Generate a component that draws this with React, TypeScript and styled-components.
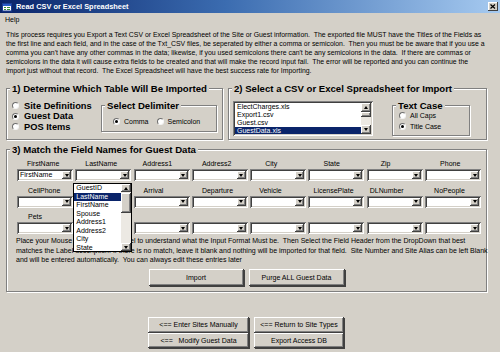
import React from 'react';
import styled, { createGlobalStyle } from 'styled-components';

const GlobalStyle = createGlobalStyle`
  html, body {
    margin: 0;
    padding: 0;
    background: #d4d0c8;
  }
  body {
    font-family: "Liberation Sans", Arial, sans-serif;
    color: #000;
  }
`;

const FACE = '#d4d0c8';

const Window = styled.div`
  width: 500px;
  height: 352px;
  background: ${FACE};
  display: flex;
  flex-direction: column;
  overflow: hidden;
  position: relative;
`;

const TitleBar = styled.div`
  height: 13px;
  display: flex;
  align-items: center;
  gap: 4px;
  padding: 0 2px;
  background: linear-gradient(90deg, #0a246a 0%, #3b6cb0 45%, #a6caf0 100%);
`;

const TitleText = styled.span`
  color: #fff;
  font-weight: bold;
  font-size: 7.4px;
  line-height: 13px;
  white-space: nowrap;
`;

const CloseButton = styled.span`
  margin-left: auto;
  width: 10px;
  height: 9px;
  background: ${FACE};
  box-shadow: inset -1px -1px #404040, inset 1px 1px #fff;
  display: flex;
  align-items: center;
  justify-content: center;
`;

const MenuBar = styled.div`
  height: 13px;
  padding-left: 5px;
  font-size: 7px;
  line-height: 13px;
`;

const Description = styled.div`
  padding: 4px 0 0 6px;
  font-size: 6.9px;
  line-height: 9px;
`;

const Line = styled.div`
  white-space: pre;
`;

const TopRow = styled.div`
  display: flex;
  gap: 5px;
  padding-left: 6px;
  margin-top: 7.5px;
`;

const Group = styled.fieldset<{ $w: number }>`
  margin: 0;
  padding: 0;
  min-width: 0;
  width: ${(p) => p.$w}px;
  box-sizing: border-box;
  border: 1px solid #808080;
  box-shadow: inset 1px 1px #fff, 1px 1px #fff;
`;

const Legend = styled.legend`
  margin-left: 3px;
  padding: 0 2px;
  background: ${FACE};
  font-weight: bold;
  font-size: 9.6px;
  line-height: 11px;
  white-space: nowrap;
`;

const GroupBody = styled.div<{ $pad: string }>`
  display: flex;
  align-items: flex-start;
  padding: ${(p) => p.$pad};
`;

const RadioColumn = styled.div<{ $w: number }>`
  width: ${(p) => p.$w}px;
  display: flex;
  flex-direction: column;
  padding-top: 7px;
`;

const RadioRow = styled.label<{ $big?: boolean; $h: number }>`
  display: flex;
  align-items: center;
  gap: ${(p) => (p.$big ? 5 : 4)}px;
  height: ${(p) => p.$h}px;
  font-size: ${(p) => (p.$big ? 9.3 : 7)}px;
  font-weight: ${(p) => (p.$big ? 'bold' : 'normal')};
  white-space: nowrap;
`;

const RadioDot = styled.span<{ $on?: boolean }>`
  width: 7px;
  height: 7px;
  box-sizing: border-box;
  border-radius: 50%;
  background: #fff;
  border: 1px solid;
  border-color: #6e6e6e #f4f4f4 #f4f4f4 #6e6e6e;
  display: inline-flex;
  align-items: center;
  justify-content: center;
  flex: none;
  &::after {
    content: '';
    width: 3px;
    height: 3px;
    border-radius: 50%;
    background: ${(p) => (p.$on ? '#000' : 'transparent')};
  }
`;

const SubGroup = styled(Group)<{ $gap?: number }>`
  margin-top: 6px;
  margin-left: ${(p) => p.$gap ?? 0}px;
`;

const RadioInline = styled.div`
  display: flex;
  gap: 8px;
  padding: 6px 0 5.5px 11px;
`;

const RadioStack = styled.div`
  display: flex;
  flex-direction: column;
  padding: 0 0 3px 6px;
`;

const Sunken = `
  background: #fff;
  box-shadow: inset 1px 1px #808080, inset -1px -1px #fff, inset 2px 2px #404040, inset -2px -2px ${FACE};
`;

const Raised = `
  background: ${FACE};
  box-shadow: inset -1px -1px #404040, inset 1px 1px #fff, inset -2px -2px #808080;
`;

const ListBox = styled.div`
  ${Sunken}
  width: 140px;
  height: 35px;
  margin-top: 7.5px;
  padding: 2px;
  box-sizing: border-box;
  display: flex;
  overflow: hidden;
`;

const ListItems = styled.div`
  flex: 1;
  display: flex;
  flex-direction: column;
  overflow: hidden;
`;

const ListItem = styled.div<{ $sel?: boolean; $h: number }>`
  height: ${(p) => p.$h}px;
  line-height: ${(p) => p.$h}px;
  font-size: 7px;
  padding-left: 2px;
  white-space: nowrap;
  flex: none;
  background: ${(p) => (p.$sel ? '#0a246a' : 'transparent')};
  color: ${(p) => (p.$sel ? '#fff' : '#000')};
`;

const ScrollBar = styled.div`
  width: 10px;
  display: flex;
  flex-direction: column;
  background: #ece9e3;
  flex: none;
`;

const ScrollButton = styled.div<{ $h: number; $top?: number }>`
  ${Raised}
  height: ${(p) => p.$h}px;
  margin-top: ${(p) => p.$top ?? 0}px;
  flex: none;
  display: flex;
  align-items: center;
  justify-content: center;
`;

const Track = styled.div`
  flex: 1;
`;

const Arrow = styled.span<{ $up?: boolean }>`
  width: 0;
  height: 0;
  border-left: 2.5px solid transparent;
  border-right: 2.5px solid transparent;
  ${(p) => (p.$up ? 'border-bottom: 3px solid #000;' : 'border-top: 3px solid #000;')}
`;

const MatchGroup = styled(Group)`
  margin: 3.5px 0 0 6px;
`;

const FieldGrid = styled.div`
  display: grid;
  grid-template-columns: repeat(8, 56px);
  column-gap: 2.3px;
  row-gap: 4.5px;
  padding: 4.5px 0 0 10px;
`;

const Field = styled.div`
  position: relative;
  display: flex;
  flex-direction: column;
`;

const FieldLabel = styled.div<{ $x: number }>`
  height: 10px;
  line-height: 10px;
  font-size: 7px;
  padding-left: ${(p) => p.$x}px;
  white-space: nowrap;
`;

const Combo = styled.div`
  ${Sunken}
  height: 12px;
  padding: 2px;
  box-sizing: border-box;
  display: flex;
  align-items: stretch;
`;

const ComboText = styled.span`
  flex: 1;
  font-size: 7px;
  line-height: 8px;
  padding-left: 1px;
  white-space: nowrap;
  overflow: hidden;
`;

const ComboButton = styled.span`
  ${Raised}
  width: 9px;
  display: flex;
  align-items: center;
  justify-content: center;
`;

const DropList = styled.div`
  position: absolute;
  top: 24px;
  left: -2px;
  width: 59px;
  height: 69px;
  box-sizing: border-box;
  border: 1px solid #000;
  background: #fff;
  display: flex;
  z-index: 2;
`;

const HelpText = styled.div`
  margin-top: 2px;
  padding-left: 9px;
  font-size: 7px;
  line-height: 9.5px;
`;

const ButtonRow = styled.div`
  display: flex;
  justify-content: center;
  gap: 5px;
  padding: 4.5px 0 5px;
`;

const Button = styled.button<{ $w: number; $h: number }>`
  ${Raised}
  box-shadow: inset -1px -1px #404040, inset 1px 1px #fff, inset -2px -2px #808080, 1px 1px #404040;
  width: ${(p) => p.$w}px;
  height: ${(p) => p.$h}px;
  border: none;
  padding: 0;
  font-family: "Liberation Sans", Arial, sans-serif;
  font-size: 7px;
  color: #000;
  white-space: pre;
`;

const NavArea = styled.div`
  display: flex;
  gap: 5px;
  padding-left: 148px;
  margin-top: 25px;
`;

const NavColumn = styled.div`
  display: flex;
  flex-direction: column;
`;

const AppIcon = () => (
  <svg width="10" height="10" viewBox="0 0 10 10">
    <rect x="0.5" y="1.5" width="9" height="7.5" fill="#fff" stroke="#1c3f94" />
    <rect x="1" y="2" width="8" height="2" fill="#2a5cc8" />
    <rect x="2" y="5" width="2" height="1" fill="#3a8a3a" />
    <rect x="5" y="5" width="3" height="1" fill="#3a8a3a" />
    <rect x="2" y="7" width="2" height="1" fill="#3a8a3a" />
    <rect x="5" y="7" width="3" height="1" fill="#3a8a3a" />
  </svg>
);

const CloseGlyph = () => (
  <svg width="6" height="5" viewBox="0 0 6 5">
    <path d="M0.5 0.5 L5 4.5 M5 0.5 L0.5 4.5" stroke="#000" strokeWidth="1.2" />
  </svg>
);

const descLines = [
  'This process requires you Export a Text CSV or Excel Spreadsheet of the Site or Guest information.  The exported file MUST have the Titles of the Fields as',
  'the first line and each field, and in the case of the Txt_CSV files, be seperated by either a comma or semicolon.  Then you must be be aware that if you use a',
  "comma you can't have any other commas in the data; likewise, if you used semicolons there can't be any semicolons in the data.  If there are commas or",
  'semicolons in the data it will cause extra fields to be created and that will make the record input fail.  The error will be reported and you can continue the',
  'import just without that record.  The Excel Spreadsheet will have the best success rate for Importing.',
];

const helpLines = [
  'Place your Mouse over the Field Label to understand what the Input Format Must be.  Then Select the Field Header from the DropDown that best',
  'matches the Label description. If there is no match, leave it blank and nothing will be imported for that field.  Site Number and Site Alias can be left Blank',
  'and will be entered automatically.  You can always edit these entries later',
];

type FieldDef = { label: string; x: number; value?: string; open?: boolean };

const fields: FieldDef[] = [
  { label: 'FirstName', x: 10, value: 'FirstName' },
  { label: 'LastName', x: 10, open: true },
  { label: 'Address1', x: 9 },
  { label: 'Address2', x: 10 },
  { label: 'City', x: 15 },
  { label: 'State', x: 15 },
  { label: 'Zip', x: 14 },
  { label: 'Phone', x: 15 },
  { label: 'CellPhone', x: 11 },
  { label: 'EMail', x: 10 },
  { label: 'Arrival', x: 10 },
  { label: 'Departure', x: 10 },
  { label: 'Vehicle', x: 9 },
  { label: 'LicensePlate', x: 5 },
  { label: 'DLNumber', x: 3 },
  { label: 'NoPeople', x: 9 },
  { label: 'Pets', x: 11 },
  { label: '', x: 0 },
  { label: '', x: 0 },
  { label: '', x: 0 },
  { label: '', x: 0 },
  { label: '', x: 0 },
  { label: '', x: 0 },
  { label: '', x: 0 },
];

const dropItems = ['GuestID', 'LastName', 'FirstName', 'Spouse', 'Address1', 'Address2', 'City', 'State'];
const files = ['ElectCharges.xls', 'Export1.csv', 'Guest.csv', 'GuestData.xls'];

const App: React.FC = () => (
  <Window>
    <GlobalStyle />
    <TitleBar>
      <AppIcon />
      <TitleText>Read CSV or Excel Spreadsheet</TitleText>
      <CloseButton>
        <CloseGlyph />
      </CloseButton>
    </TitleBar>
    <MenuBar>Help</MenuBar>
    <Description>
      {descLines.map((l) => (
        <Line key={l}>{l}</Line>
      ))}
    </Description>

    <TopRow>
      <Group $w={217}>
        <Legend>1) Determine Which Table Will Be Imported</Legend>
        <GroupBody $pad="0 0 0 5px">
          <RadioColumn $w={89}>
            <RadioRow $big $h={10.5}>
              <RadioDot />
              Site Definitions
            </RadioRow>
            <RadioRow $big $h={10.5}>
              <RadioDot $on />
              Guest Data
            </RadioRow>
            <RadioRow $big $h={10.5}>
              <RadioDot />
              POS Items
            </RadioRow>
          </RadioColumn>
          <SubGroup $w={116}>
            <Legend>Select Delimiter</Legend>
            <RadioInline>
              <RadioRow $h={9}>
                <RadioDot $on />
                Comma
              </RadioRow>
              <RadioRow $h={9}>
                <RadioDot />
                Semicolon
              </RadioRow>
            </RadioInline>
          </SubGroup>
        </GroupBody>
      </Group>

      <Group $w={259}>
        <Legend>2) Select a CSV or Excel Spreadsheet for Import</Legend>
        <GroupBody $pad="0 0 3px 4px">
          <ListBox>
            <ListItems>
              {files.map((f, i) => (
                <ListItem key={f} $h={8} $sel={i === 3}>
                  {f}
                </ListItem>
              ))}
            </ListItems>
            <ScrollBar>
              <ScrollButton $h={9}>
                <Arrow $up />
              </ScrollButton>
              <ScrollButton $h={5} />
              <Track />
              <ScrollButton $h={9}>
                <Arrow />
              </ScrollButton>
            </ScrollBar>
          </ListBox>
          <SubGroup $w={78} $gap={19}>
            <Legend>Text Case</Legend>
            <RadioStack>
              <RadioRow $h={10.5}>
                <RadioDot />
                All Caps
              </RadioRow>
              <RadioRow $h={10.5}>
                <RadioDot $on />
                Title Case
              </RadioRow>
            </RadioStack>
          </SubGroup>
        </GroupBody>
      </Group>
    </TopRow>

    <MatchGroup $w={481}>
      <Legend>3) Match the Field Names for Guest Data</Legend>
      <FieldGrid>
        {fields.map((f, i) => (
          <Field key={i}>
            <FieldLabel $x={f.x}>{f.label}</FieldLabel>
            <Combo>
              <ComboText>{f.value}</ComboText>
              <ComboButton>
                <Arrow />
              </ComboButton>
            </Combo>
            {f.open && (
              <DropList>
                <ListItems>
                  {dropItems.map((d, j) => (
                    <ListItem key={d} $h={8.5} $sel={j === 1}>
                      {d}
                    </ListItem>
                  ))}
                </ListItems>
                <ScrollBar>
                  <ScrollButton $h={8}>
                    <Arrow $up />
                  </ScrollButton>
                  <ScrollButton $h={20} $top={1} />
                  <Track />
                  <ScrollButton $h={8}>
                    <Arrow />
                  </ScrollButton>
                </ScrollBar>
              </DropList>
            )}
          </Field>
        ))}
      </FieldGrid>
      <HelpText>
        {helpLines.map((l) => (
          <Line key={l}>{l}</Line>
        ))}
      </HelpText>
      <ButtonRow>
        <Button $w={95} $h={17}>
          Import
        </Button>
        <Button $w={96} $h={17}>
          Purge ALL Guest Data
        </Button>
      </ButtonRow>
    </MatchGroup>

    <NavArea>
      <NavColumn>
        <Button $w={101} $h={15.5}>
          {'<== Enter Sites Manually'}
        </Button>
        <Button $w={101} $h={15.5}>
          {'<==   Modify Guest Data'}
        </Button>
      </NavColumn>
      <NavColumn>
        <Button $w={90} $h={15.5}>
          {'<== Return to Site Types'}
        </Button>
        <Button $w={90} $h={15.5}>
          Export Access DB
        </Button>
      </NavColumn>
    </NavArea>
  </Window>
);

export default App;
